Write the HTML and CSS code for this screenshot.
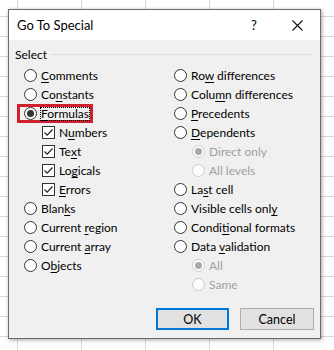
FILE: index.html
```html
<!DOCTYPE html>
<html lang="en">
<head>
    <meta charset="UTF-8">
    <title>Go To Special</title>
    <link rel="stylesheet" href="styles.css">
</head>
<body>
    <div class="dialog">
        <div class="titlebar">
            <span class="title">Go To Special</span>
            <span class="help">?</span>
            <span class="close">
                <svg width="11" height="11" viewBox="0 0 11 11"><path d="M0.5 0.5L10.5 10.5M10.5 0.5L0.5 10.5" stroke="#111" stroke-width="1.1" fill="none"/></svg>
            </span>
        </div>

        <div class="content">
            <div class="group-head">
                <span>Select</span>
                <span class="line"></span>
            </div>

            <div class="columns">
                <div class="col col-left">
                    <div class="row"><span class="radio"></span><span><u>C</u>omments</span></div>
                    <div class="row"><span class="radio"></span><span>Co<u>n</u>stants</span></div>
                    <div class="row">
                        <span class="mark"><span class="radio checked"></span><span class="focus"><u>F</u>ormulas</span></span>
                    </div>
                    <div class="row sub"><span class="check"><svg width="11" height="11" viewBox="0 0 11 11"><path d="M1.5 5.5L4.2 8.2L9.5 2.5" stroke="#222" stroke-width="1.2" fill="none"/></svg></span><span>N<u>u</u>mbers</span></div>
                    <div class="row sub"><span class="check"><svg width="11" height="11" viewBox="0 0 11 11"><path d="M1.5 5.5L4.2 8.2L9.5 2.5" stroke="#222" stroke-width="1.2" fill="none"/></svg></span><span>Te<u>x</u>t</span></div>
                    <div class="row sub"><span class="check"><svg width="11" height="11" viewBox="0 0 11 11"><path d="M1.5 5.5L4.2 8.2L9.5 2.5" stroke="#222" stroke-width="1.2" fill="none"/></svg></span><span>Lo<u>g</u>icals</span></div>
                    <div class="row sub"><span class="check"><svg width="11" height="11" viewBox="0 0 11 11"><path d="M1.5 5.5L4.2 8.2L9.5 2.5" stroke="#222" stroke-width="1.2" fill="none"/></svg></span><span><u>E</u>rrors</span></div>
                    <div class="row"><span class="radio"></span><span>Blan<u>k</u>s</span></div>
                    <div class="row"><span class="radio"></span><span>Current <u>r</u>egion</span></div>
                    <div class="row"><span class="radio"></span><span>Current <u>a</u>rray</span></div>
                    <div class="row"><span class="radio"></span><span>O<u>b</u>jects</span></div>
                </div>

                <div class="col col-right">
                    <div class="row"><span class="radio"></span><span>Ro<u>w</u> differences</span></div>
                    <div class="row"><span class="radio"></span><span>Colu<u>m</u>n differences</span></div>
                    <div class="row"><span class="radio"></span><span><u>P</u>recedents</span></div>
                    <div class="row"><span class="radio"></span><span><u>D</u>ependents</span></div>
                    <div class="row sub disabled"><span class="radio checked"></span><span>Direct only</span></div>
                    <div class="row sub disabled"><span class="radio"></span><span>All levels</span></div>
                    <div class="row"><span class="radio"></span><span>La<u>s</u>t cell</span></div>
                    <div class="row"><span class="radio"></span><span>Visible cells onl<u>y</u></span></div>
                    <div class="row"><span class="radio"></span><span>Condi<u>t</u>ional formats</span></div>
                    <div class="row"><span class="radio"></span><span>Data <u>v</u>alidation</span></div>
                    <div class="row sub disabled"><span class="radio checked"></span><span>All</span></div>
                    <div class="row sub disabled"><span class="radio"></span><span>Same</span></div>
                </div>
            </div>

            <div class="buttons">
                <button class="btn btn-default">OK</button>
                <button class="btn">Cancel</button>
            </div>
        </div>
    </div>
</body>
</html>
```

FILE: styles.css
```css
body {
    margin: 0;
    height: 350px;
    overflow: hidden;
    background-color: #fff;
    background-image:
        linear-gradient(to right, #d8d8d8 1px, transparent 1px),
        linear-gradient(to bottom, #d8d8d8 1px, transparent 1px);
    background-size: 64px 100%, 100% 20px;
    background-position: 17px 0, 0 16px;
    font-family: Lato, "Noto Sans", sans-serif;
    font-size: 12px;
    color: #000;
}

.dialog {
    width: 311px;
    height: 328px;
    margin: 9px 0 0 8px;
    border: 1px solid #6b6b6b;
    background: #f0f0f0;
    box-shadow: 1px 1px 4px rgba(0,0,0,0.35);
    display: flex;
    flex-direction: column;
}

.titlebar {
    height: 30px;
    background: #fff;
    display: flex;
    align-items: center;
    padding-left: 8px;
    font-size: 13px;
}

.title {
    flex: 1;
}

.help {
    width: 12px;
    margin-right: 29px;
    font-size: 13px;
}

.close {
    display: flex;
    margin-right: 17px;
}

.content {
    flex: 1;
    padding: 6px 6px 0 6px;
    display: flex;
    flex-direction: column;
}

.group-head {
    height: 16px;
    display: flex;
    align-items: center;
}

.group-head .line {
    flex: 1;
    height: 1px;
    background: #dcdcdc;
    margin: 1px 1px 0 3px;
}

.columns {
    display: flex;
    margin-top: 4px;
}

.col-left {
    width: 150px;
    padding-left: 9px;
}

.row {
    height: 19px;
    display: flex;
    align-items: center;
    gap: 4px;
    white-space: nowrap;
}

.row.sub {
    padding-left: 18px;
}

.radio {
    width: 11px;
    height: 11px;
    border: 1px solid #333;
    border-radius: 50%;
    background: #fff;
    display: flex;
    align-items: center;
    justify-content: center;
    flex: none;
}

.radio.checked::after {
    content: "";
    width: 7px;
    height: 7px;
    border-radius: 50%;
    background: #333;
}

.check {
    width: 11px;
    height: 11px;
    border: 1px solid #333;
    background: #fff;
    display: flex;
    flex: none;
}

.disabled {
    color: #a0a0a0;
}

.disabled .radio {
    border-color: #cccccc;
    background: #fcfcfc;
}

.disabled .radio.checked::after {
    background: #a8a8a8;
}

.mark {
    display: flex;
    align-items: center;
    gap: 4px;
    height: 13px;
    margin-left: -7px;
    padding: 0 1px 0 4px;
    border: 3px solid #d0202e;
}

.focus {
    outline: 1px dotted #000;
    line-height: 12px;
}

u {
    text-decoration-thickness: 1px;
    text-underline-offset: 2px;
}

.buttons {
    display: flex;
    justify-content: flex-end;
    gap: 11px;
    margin-top: auto;
    margin-bottom: 8px;
}

.btn {
    height: 22px;
    width: 74px;
    background: #e1e1e1;
    border: 1px solid #adadad;
    font-family: inherit;
    font-size: 12.5px;
    color: #000;
    padding: 0;
}

.btn-default {
    width: 73px;
    border: 2px solid #0078d7;
}
```
